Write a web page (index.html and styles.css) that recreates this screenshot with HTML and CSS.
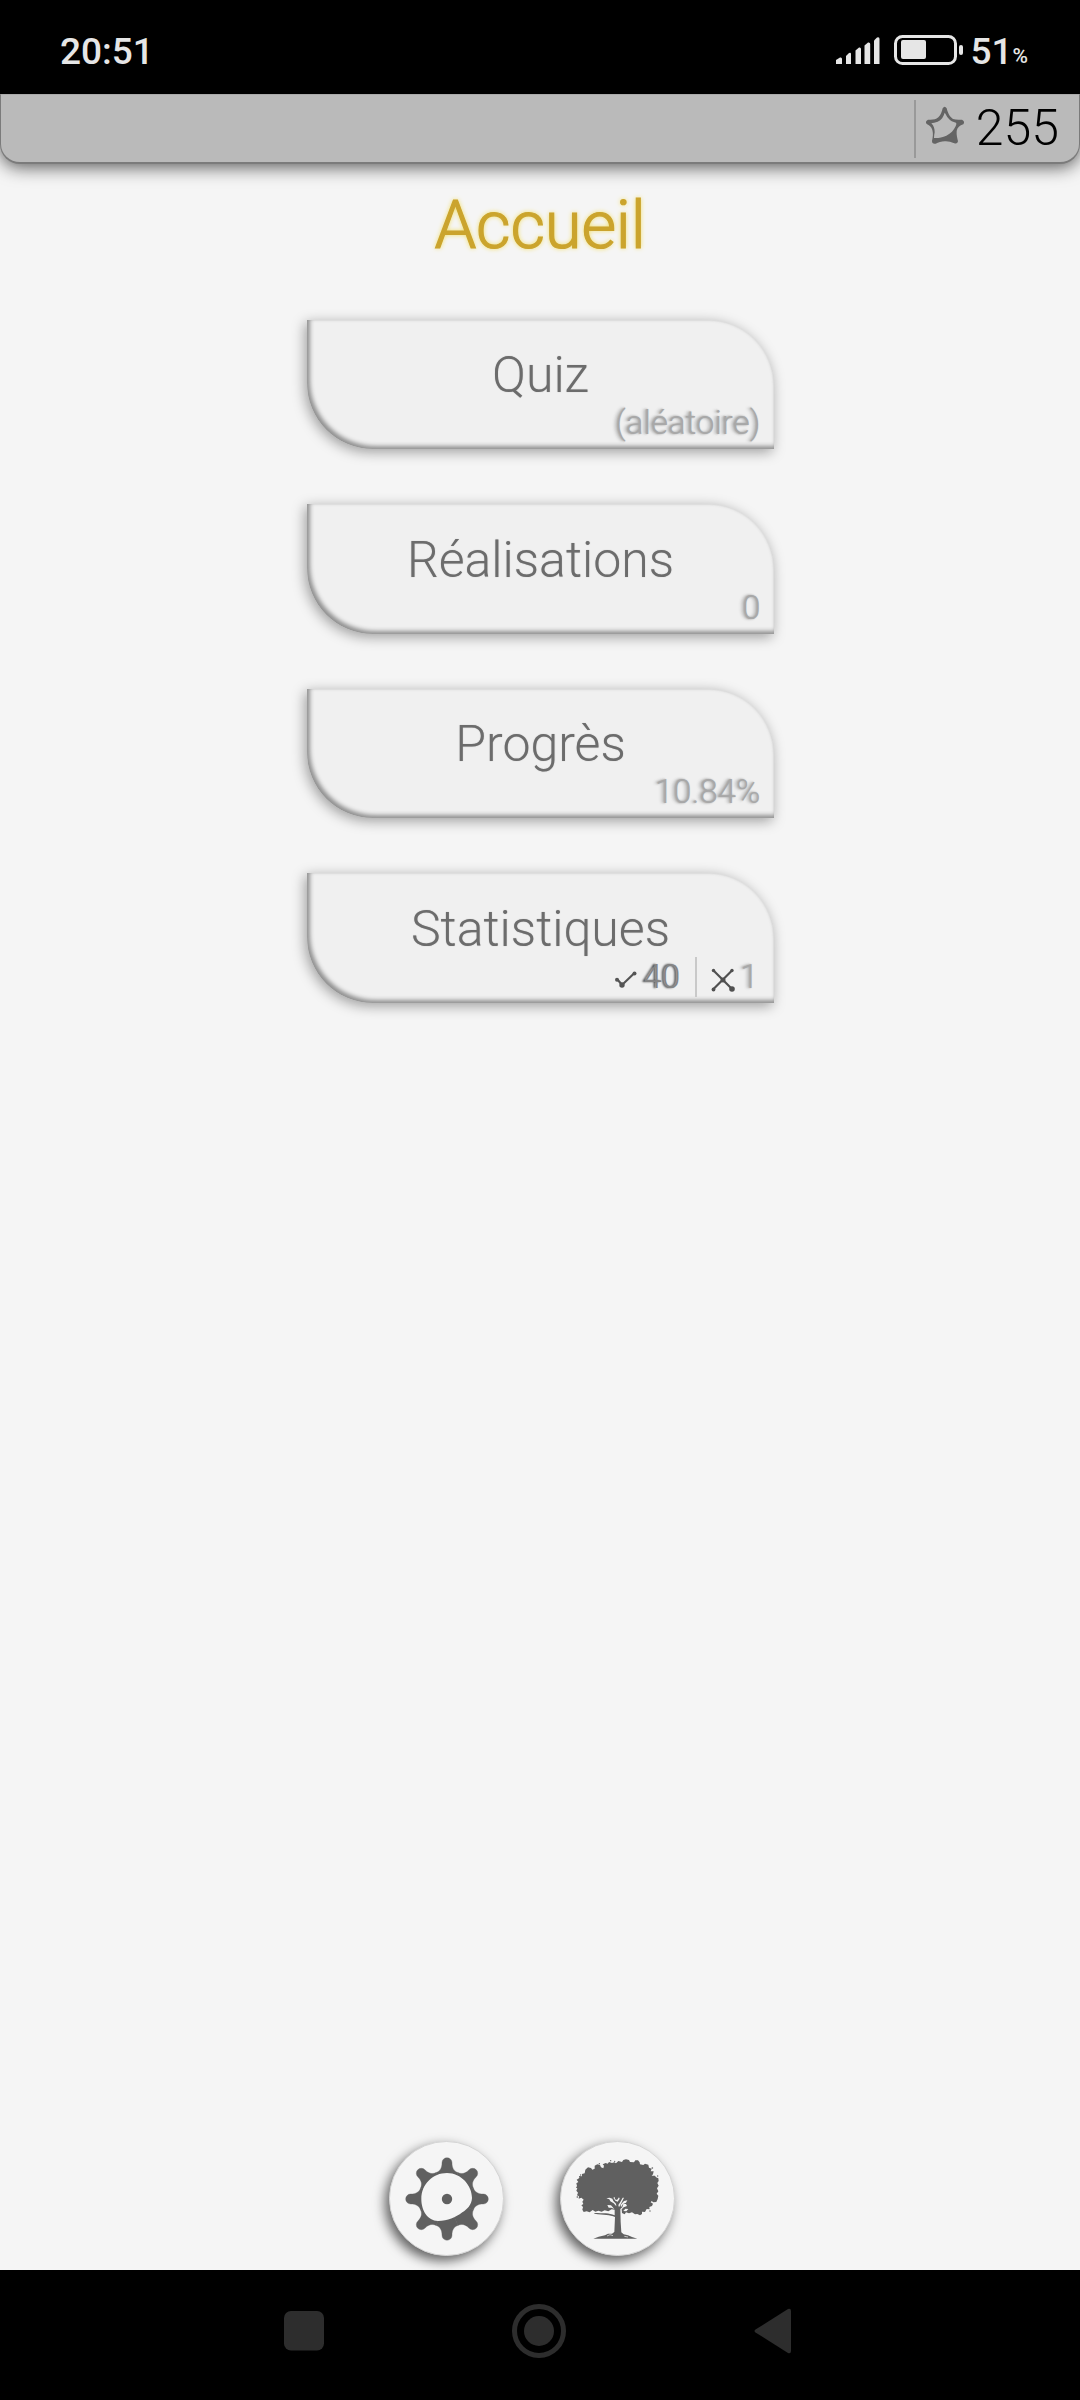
FILE: index.html
```html
<!DOCTYPE html>
<html lang="fr">
<head>
<meta charset="utf-8">
<title>Accueil</title>
<link rel="stylesheet" href="styles.css">
</head>
<body>
<div class="status">
  <span class="clock">20:51</span>
  <div class="status-right">
    <svg class="signal" width="45" height="30" viewBox="0 0 45 30"><g fill="#e6e6e6"><path d="M1 29V25L5 22.500Q7 22 7 24V29Z"/><path d="M11 29V21L14 18Q16 17 16 19V29Z"/><path d="M20.500 29V15.500L24 12.500Q26 12 26 14V29Z"/><path d="M29.500 29V10.500L33 7.500Q35.200 7 35.200 9V29Z"/><path d="M39 29V5.500L42 2.500Q44.500 1.500 44.500 4V29Z"/></g></svg>
    <svg class="battery" width="70" height="30" viewBox="0 0 70 30"><rect x="1.500" y="1.500" width="60" height="27" rx="7" fill="none" stroke="#e6e6e6" stroke-width="3"/><rect x="7" y="5" width="25" height="19" rx="2" fill="#e6e6e6"/><rect x="65" y="10" width="4" height="10" rx="2" fill="#e6e6e6"/></svg>
    <span class="level">51</span><span class="percent">%</span>
  </div>
</div>
<header class="topbar">
  <div class="score">
    <svg width="42" height="40" viewBox="372 316 126 120"><path fill="#646464" fill-rule="evenodd" d="M428 326Q434 317 440 326C444 342 449 351 459 358C468 361 477 360 486 360Q496 365 490 374C479 378 472 383 470 394C469 406 472 416 474 425Q472 434 463 431C452 427 444 424 434 425C424 425 415 429 407 432Q396 434 396 424C399 412 400 402 397 391C394 381 388 377 380 373Q374 365 384 360C397 361 407 360 415 353C422 347 425 337 428 326ZM434 339C431 351 424 361 413 366C406 369 399 369 394 371C402 378 404 388 404 398C403 404 402 409 402 415C413 416 426 414 439 408C453 401 461 391 466 381C469 375 470 371 468 369C459 367 451 364 445 356C440 350 438 344 434 339Z"/></svg>
    <span>255</span>
  </div>
</header>
<main>
  <h1>Accueil</h1>
  <nav class="menu">
    <a class="card"><span class="title">Quiz</span><span class="sub">(aléatoire)</span></a>
    <a class="card"><span class="title">Réalisations</span><span class="sub">0</span></a>
    <a class="card"><span class="title">Progrès</span><span class="sub">10.84%</span></a>
    <a class="card"><span class="title">Statistiques</span>
      <span class="sub stats">
        <span class="stat good"><svg width="24" height="18" viewBox="0 0 24 18"><path d="M3.500 8.500 8 14 20.500 2" fill="none" stroke="#555" stroke-width="2.200"/><circle cx="3" cy="8.700" r="2" fill="#555"/><circle cx="8" cy="14" r="2.700" fill="#555"/><circle cx="20.500" cy="2.500" r="2" fill="#555"/></svg>40</span>
        <span class="stat bad"><svg width="24" height="24" viewBox="0 0 24 24"><path d="M2.500 2.500 21 21M21 2.500 2.500 21" stroke="#505050" stroke-width="2.200"/><g fill="#505050"><circle cx="2.500" cy="2.500" r="1.700"/><circle cx="21" cy="2.500" r="1.700"/><circle cx="2.500" cy="21.500" r="1.900"/><circle cx="21" cy="21" r="2.800"/><circle cx="12" cy="12" r="2.500"/></g></svg>1</span>
      </span>
    </a>
  </nav>
  <div class="actions">
    <button class="round" aria-label="Paramètres"><svg width="84" height="84" viewBox="-126 -126 252 252">
      <defs><path id="tooth" d="M0 0L-33 -79C-20.500 -84 -15 -93 -15 -109A15 15 0 0 1 15 -109C15 -93 20.500 -84 33 -79Z"/></defs>
      <g fill="#606060" stroke="#606060"><use href="#tooth"/><use href="#tooth" transform="rotate(45)"/><use href="#tooth" transform="rotate(90)"/><use href="#tooth" transform="rotate(135)"/><use href="#tooth" transform="rotate(180)"/><use href="#tooth" transform="rotate(225)"/><use href="#tooth" transform="rotate(270)"/><use href="#tooth" transform="rotate(315)"/></g>
      <path fill="#f5f5f5" d="M-77 0C-77 -45 -42 -78 0 -78C43 -78 75 -40 75 -3C74 18 60 31 46 40C25 56 3 66 -27 66C-58 65 -77 35 -77 0Z"/>
      <circle r="15.500" fill="#606060"/></svg></button>
    <button class="round" aria-label="Arbre"><svg width="84" height="84" viewBox="108 112 252 252">
      <g fill="#606060"><path d="M111 199 109 191 115 187 110 180 118 175 117 169 126 170 126 163 134 161 136 150 144 143 153 145 157 150 164 147 164 138 172 134 180 136 183 143 190 146 192 138 188 134 197 130 203 132 207 127 216 130 223 128 228 131 235 124 246 127 250 121 258 119 267 121 270 127 282 128 286 122 294 122 299 128 300 134 310 136 315 132 325 135 327 144 335 147 332 155 341 155 339 164 335 168 345 168 348 173 355 176 356 184 352 190 356 198 351 206 355 215 350 222 355 228 353 238 349 247 340 248 335 244 332 248 339 252 336 259 328 262 329 269 320 268 315 277 306 276 306 283 300 287 292 283 285 284 276 278 267 281 258 278 254 284 246 280 245 269 251 263 261 259 258 253 250 253 247 263 241 268 242 307 244 338 251 344 264 347 276 352 292 357H160L176 351 195 347 204 342 216 342 223 337 225 292C210 284 192 287 163 282V280C190 281 207 279 224 287L224 270 215 269 205 275 194 272 185 276 175 273 166 276 158 271 149 278 140 275 131 277 127 270 129 262 124 257 130 253 127 246 131 240 124 234 116 237 117 230 111 227 114 219 109 213 112 206 108 204Z"/>
      <g><circle cx="178" cy="132" r="2"/><circle cx="212" cy="123" r="2"/><circle cx="337" cy="145" r="2.500"/><circle cx="224" cy="125" r="2"/><circle cx="122" cy="166" r="2"/><circle cx="112" cy="232" r="2.500"/><circle cx="353" cy="169" r="2"/><circle cx="330" cy="274" r="2"/></g></g>
      <g fill="#f5f5f5"><path d="M199 236 209 234 217 237 220 244 228 252 229 260 221 251 211 245 208 239Z"/><path d="M220 234 224 232 225 239 231 241 237 233 239 237 233 246 226 243Z"/><path d="M248 234 252 234 244 250 237 263 235 256 241 247Z"/><path d="M262 242 258 249 249 253 243 263 242 255 252 244Z"/><path d="M202 256 213 257 223 268 214 264 206 264Z"/><path d="M256 267 265 268 259 275 250 274Z"/></g>
      <path d="M201 349 210 345 219 348M253 350 264 352" fill="none" stroke="#f5f5f5" stroke-width="2"/></svg></button>
  </div>
</main>
<footer class="navbar">
  <svg width="40" height="40" viewBox="0 0 40 40"><rect x="0" y="0" width="40" height="39.500" rx="7" fill="#2d2d2d"/></svg>
  <svg width="54" height="54" viewBox="0 0 54 54"><circle cx="27" cy="27" r="24.500" fill="none" stroke="#2d2d2d" stroke-width="5"/><circle cx="27" cy="27" r="15" fill="#2d2d2d"/></svg>
  <svg width="38" height="46" viewBox="0 0 38 46"><path d="M1.500 21.500 34 1Q37 0 37 3V43Q37 46 34 45L1.500 24.500Q-.5 23 1.500 21.500Z" fill="#2d2d2d"/></svg>
</footer>
</body>
</html>
```
FILE: styles.css
```css
* { box-sizing: border-box; }
body { margin: 0; width: 1080px; height: 2400px; display: flex; flex-direction: column; background: #f5f5f5; font-family: Roboto, sans-serif; overflow: hidden; }
svg { display: block; flex: none; overflow: visible; }
.status { height: 94px; flex: none; background: #000; color: #e6e6e6; display: flex; justify-content: space-between; padding: 29px 52px 0 60px; font-size: 37px; line-height: 44px; font-weight: 500; }
.clock { padding-top: 1px; }
.status-right { display: flex; }
.signal { margin: 6px 14px 0 0; }
.battery { margin: 6px 6px 0 0; }
.level { padding-top: 1px; }
.percent { font-size: 21px; line-height: 55px; }
.topbar { height: 70px; flex: none; background: #bababa; border: 1px solid #7b7b7b; border-top-color: #aaa; border-bottom-width: 2px; border-radius: 0 0 20px 20px; box-shadow: 0 3px 18px rgba(0,0,0,.65); display: flex; justify-content: flex-end; padding: 5px 20px 4px 0; clip-path: inset(0 0 -40px 0); }
.score { display: flex; border-left: 2px solid #999; padding-left: 8px; font-size: 50px; font-weight: 300; line-height: 56px; color: #000; }
.score svg { margin: 5px 10px 0 0; }
main { flex: 1; display: flex; flex-direction: column; align-items: center; }
h1 { margin: 20px 0 0; font-size: 67px; line-height: 82px; font-weight: 300; letter-spacing: -.2px; color: #cba42d; -webkit-text-stroke: 1.200px #cba42d; text-shadow: 0 0 5px #f0d840; }
.menu { margin-top: 54px; display: grid; gap: 55px; }
.card { width: 467px; height: 129.400px; padding: 27.400px 13px 0 14px; display: flex; flex-direction: column; background: #f0f0f0; border-radius: 0 66px 0 66px; box-shadow: inset 3px -3px 4px #929292, inset 0 0 3px #ccc, -2px 3px 13px rgba(0,0,0,.36); }
.title { text-align: center; font-size: 50px; line-height: 56px; font-weight: 300; color: #6c6c6c; text-shadow: 0 0 1px #aaa; }
.sub { display: flex; justify-content: flex-end; font-size: 33px; line-height: 40px; font-weight: 300; color: #a8a8a8; text-shadow: -1px 0 2px #a0a0a0, -3px 0 3px #c4c4c4; }
.stats { padding-right: 2px; }
.stat { display: flex; }
.good { color: #858585; text-shadow: -2px 0 2px #444; padding-right: 15px; }
.good svg { margin: 14px 6px 0 0; }
.bad { border-left: 2px solid #c9c9c9; padding-left: 14px; }
.bad svg { margin: 11px 5px 0 0; }
.actions { margin-top: auto; margin-right: 16px; padding-bottom: 14px; display: flex; gap: 56px; }
.round { width: 115px; height: 115px; padding: 0; border: 1px solid #d5d5d5; border-radius: 50%; background: #f5f5f5; display: flex; align-items: center; justify-content: center; box-shadow: -4px 5px 12px rgba(0,0,0,.6); }
.navbar { height: 130px; flex: none; background: #000; display: flex; justify-content: space-between; align-items: center; padding: 0 288px 8px 284px; }
```
